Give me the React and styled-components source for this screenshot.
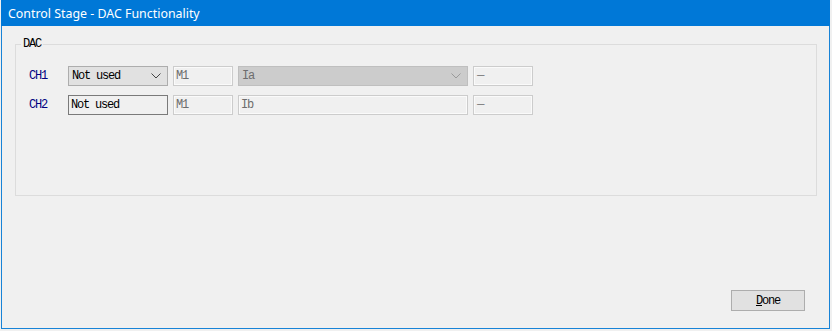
import React from 'react'
import styled, {createGlobalStyle} from 'styled-components'

const GlobalStyle = createGlobalStyle`
    html, body {
        margin: 0;
        padding: 0;
        background: #f0f0f0;
    }
    body {
        width: 832px;
        height: 331px;
        overflow: hidden;
    }
`;

const Chevron = ({color}) => (
    <svg width="10" height="6" viewBox="0 0 10 6">
        <path d="M0.5 0.5 L5 5 L9.5 0.5" fill="none" stroke={color} strokeWidth="1"/>
    </svg>
);

const App = () => {
    return (
        <>
            <GlobalStyle/>
            <Window>
                <TitleBar>Control Stage - DAC Functionality</TitleBar>
                <Content>
                    <GroupBox>
                        <Legend>DAC</Legend>
                        <Row>
                            <ChannelLabel>CH1</ChannelLabel>
                            <Combo width={100}>
                                <span>Not used</span>
                                <Chevron color="#444"/>
                            </Combo>
                            <Field width={60} disabled>M1</Field>
                            <Combo width={230} disabled>
                                <span>Ia</span>
                                <Chevron color="#9a9a9a"/>
                            </Combo>
                            <Field width={60} disabled><DashText>—</DashText></Field>
                        </Row>
                        <Row>
                            <ChannelLabel>CH2</ChannelLabel>
                            <Field width={100}>Not used</Field>
                            <Field width={60} disabled>M1</Field>
                            <Field width={230} disabled>Ib</Field>
                            <Field width={60} disabled><DashText>—</DashText></Field>
                        </Row>
                    </GroupBox>
                    <Footer>
                        <Button><u>D</u>one</Button>
                    </Footer>
                </Content>
            </Window>
        </>
    )
};

const Window = styled.div`
    box-sizing: border-box;
    margin-left: 1px;
    width: 829px;
    height: 329px;
    display: flex;
    flex-direction: column;
    border: 1px solid #1883d7;
    border-top: none;
    background: #f0f0f0;
`;

const TitleBar = styled.div`
    height: 26px;
    margin: 0 -1px;
    padding-left: 7px;
    display: flex;
    align-items: center;
    background: #0078d7;
    color: #ffffff;
    font-family: "Noto Sans", "Open Sans", sans-serif;
    font-size: 12.4px;
`;

const Content = styled.div`
    flex: 1;
    display: flex;
    flex-direction: column;
    padding: 18px 12px 17px 13px;
`;

const GroupBox = styled.div`
    position: relative;
    box-sizing: border-box;
    height: 152px;
    border: 1px solid #dcdcdc;
    padding: 21px 0 0 13px;
    display: flex;
    flex-direction: column;
    gap: 9px;
    font-family: "Liberation Mono", monospace;
    font-size: 12px;
    letter-spacing: -1.2px;
`;

const Legend = styled.span`
    position: absolute;
    top: -8px;
    left: 5px;
    padding: 0 2px;
    background: #f0f0f0;
    color: #000;
    line-height: 14px;
`;

const Row = styled.div`
    display: flex;
    align-items: center;
    gap: 5px;
    height: 20px;
`;

const ChannelLabel = styled.span`
    width: 34px;
    color: #00007f;
`;

const Field = styled.div`
    box-sizing: border-box;
    width: ${p => p.width}px;
    height: 20px;
    padding-left: 2px;
    display: flex;
    align-items: center;
    border: 1px solid ${p => p.disabled ? '#cccccc' : '#7a7a7a'};
    box-shadow: ${p => p.disabled ? 'inset 0 0 0 1px #fafafa' : 'none'};
    background: #f0f0f0;
    color: ${p => p.disabled ? '#6d6d6d' : '#000'};
    white-space: nowrap;
`;

const DashText = styled.span`
    font-family: "Liberation Sans", sans-serif;
    font-size: 7.5px;
    font-weight: bold;
    letter-spacing: 0;
    margin: -4px 0 0 1px;
`;

const Combo = styled.div`
    box-sizing: border-box;
    width: ${p => p.width}px;
    height: 20px;
    padding: 0 6px 0 3px;
    display: flex;
    align-items: center;
    justify-content: space-between;
    border: 1px solid ${p => p.disabled ? '#bfbfbf' : '#adadad'};
    background: ${p => p.disabled ? '#cccccc' : '#e1e1e1'};
    color: ${p => p.disabled ? '#6d6d6d' : '#000'};
    white-space: nowrap;
`;

const Footer = styled.div`
    margin-top: auto;
    display: flex;
    justify-content: flex-end;
    padding-right: 12px;
`;

const Button = styled.button`
    box-sizing: border-box;
    width: 74px;
    height: 21px;
    padding: 0;
    border: 1px solid #adadad;
    background: #e1e1e1;
    color: #000;
    font-family: "Liberation Mono", monospace;
    font-size: 12px;
    letter-spacing: -1.2px;
    cursor: pointer;
`;

export default App
